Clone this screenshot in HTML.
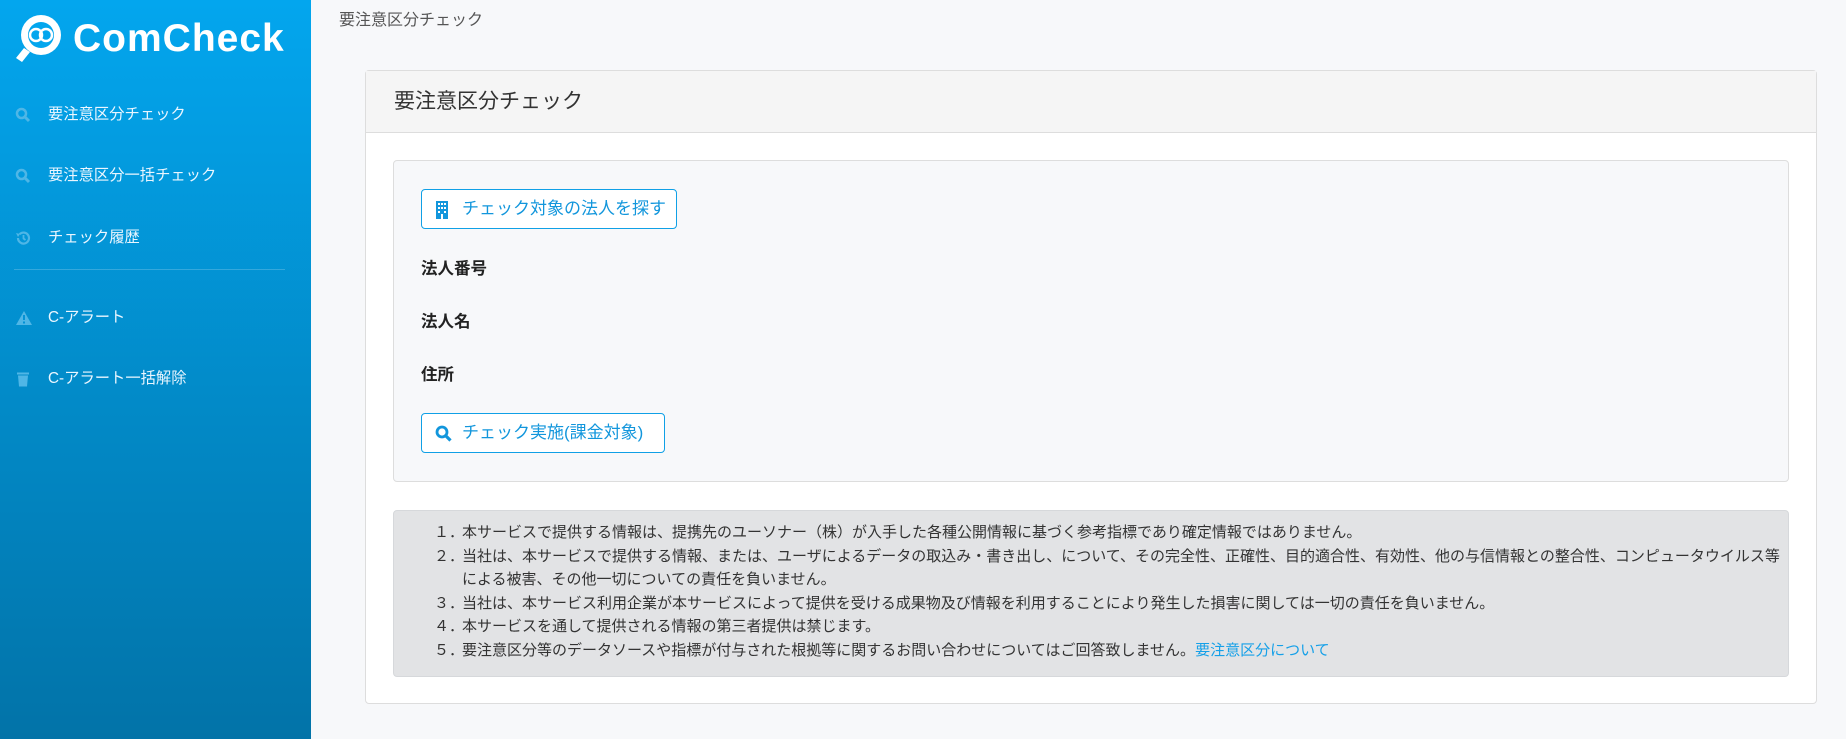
<!DOCTYPE html>
<html><head><meta charset="utf-8"><style>
*{box-sizing:border-box;margin:0;padding:0}
body{width:1846px;height:739px;overflow:hidden;background:#f7f8fa;font-family:"Liberation Sans","Noto Sans CJK JP",sans-serif;position:relative;color:#222}
.side{position:absolute;left:0;top:0;width:311px;height:739px;background:linear-gradient(#03a6ee,#0273a8)}
.logo{position:absolute;left:14px;top:14px}
.logotxt{position:absolute;left:73px;top:17px;color:#fff;font-size:39px;font-weight:bold;font-family:"Liberation Sans",sans-serif;letter-spacing:1px}
.nav{position:absolute;left:0;color:#eaf6ff;font-size:15.3px;width:311px;height:30px;line-height:30px}
.nav span.t{position:absolute;left:48px}
.nav svg{position:absolute;left:15px;top:7px}
.sep{position:absolute;left:14px;top:269px;width:271px;height:1px;background:rgba(255,255,255,.2)}
.bc{position:absolute;left:339px;top:6px;font-size:16px;color:#555}
.card{position:absolute;left:365px;top:70px;width:1452px;height:634px;background:#fff;border:1px solid #ddd;border-radius:4px}
.hd{height:62px;background:#f5f5f5;border-bottom:1px solid #ddd;padding-left:28px;line-height:62px;font-size:21px;color:#333}
.inner{position:absolute;left:27px;top:89px;width:1396px;height:322px;background:#f7f8fa;border:1px solid #ddd;border-radius:4px}
.btn{position:absolute;left:27px;height:40px;border:1px solid #10a0e6;border-radius:4px;background:#fff;color:#1296dc;font-size:17px;line-height:38px;padding-left:40px}
.btn svg{position:absolute;left:13px;top:11px}
.lbl{position:absolute;left:27px;font-weight:bold;font-size:16.5px;color:#222}
.note{position:absolute;left:27px;top:439px;width:1396px;height:167px;background:#e2e3e5;border:1px solid #d6d8db;border-radius:4px;font-size:15px;line-height:23.5px;color:#333;padding-top:10px}
.note div{position:relative;padding-left:68px;white-space:nowrap}
.note b{position:absolute;left:40px;font-weight:normal}
a{color:#15a0e8;text-decoration:none}
</style></head><body>
<div class="side">
<svg class="logo" width="50" height="50" viewBox="0 0 50 50"><circle cx="27" cy="21" r="20" fill="#fff"/><path d="M10 34 L2 44 L8 48 L16 38Z" fill="#fff"/><circle cx="27" cy="21" r="13" fill="#03a6ee"/><circle cx="22" cy="21" r="6" fill="none" stroke="#fff" stroke-width="2.5"/><circle cx="32" cy="21" r="6" fill="none" stroke="#fff" stroke-width="2.5"/></svg>
<div class="logotxt">ComCheck</div>
<div class="nav" style="top:100px"><svg width="16" height="16" viewBox="0 0 16 16"><circle cx="6.5" cy="6.5" r="4.5" fill="none" stroke="#4fb6e6" stroke-width="2.5"/><path d="M10 10 L14 14" stroke="#4fb6e6" stroke-width="3"/></svg><span class="t">要注意区分チェック</span></div>
<div class="nav" style="top:161px"><svg width="16" height="16" viewBox="0 0 16 16"><circle cx="6.5" cy="6.5" r="4.5" fill="none" stroke="#4fb6e6" stroke-width="2.5"/><path d="M10 10 L14 14" stroke="#4fb6e6" stroke-width="3"/></svg><span class="t">要注意区分一括チェック</span></div>
<div class="nav" style="top:223px"><svg width="16" height="16" viewBox="0 0 16 16"><path d="M3 8 A5.5 5.5 0 1 0 4.6 4.2" fill="none" stroke="#4fb6e6" stroke-width="2.2"/><path d="M1 3 L5 4 L3 7Z" fill="#4fb6e6"/><path d="M8.5 5 V8.5 L10.5 10" fill="none" stroke="#4fb6e6" stroke-width="1.8"/></svg><span class="t">チェック履歴</span></div>
<div class="sep"></div>
<div class="nav" style="top:303px"><svg width="18" height="16" viewBox="0 0 18 16"><path d="M9 1 L17 15 H1Z" fill="#4fb6e6"/><rect x="8" y="5" width="2" height="5" fill="#0292d6"/><rect x="8" y="11.5" width="2" height="2" fill="#0292d6"/></svg><span class="t">C-アラート</span></div>
<div class="nav" style="top:364px"><svg width="16" height="16" viewBox="0 0 16 16"><rect x="2" y="1.5" width="12" height="2" fill="#4fb6e6"/><path d="M3 4.5 H13 L12 15.5 H4Z" fill="#4fb6e6"/></svg><span class="t">C-アラート一括解除</span></div>
</div>
<div class="bc">要注意区分チェック</div>
<div class="card">
<div class="hd">要注意区分チェック</div>
<div class="inner">
<div class="btn" style="top:28px;width:256px"><svg width="14" height="18" viewBox="0 0 14 18"><rect x="1" y="0" width="12" height="18" fill="#1296dc"/><g fill="#fff"><rect x="3" y="2" width="2" height="2"/><rect x="6" y="2" width="2" height="2"/><rect x="9" y="2" width="2" height="2"/><rect x="3" y="6" width="2" height="2"/><rect x="6" y="6" width="2" height="2"/><rect x="9" y="6" width="2" height="2"/><rect x="3" y="10" width="2" height="2"/><rect x="9" y="10" width="2" height="2"/><rect x="6" y="13" width="2" height="5"/></g></svg>チェック対象の法人を探す</div>
<div class="lbl" style="top:94px">法人番号</div>
<div class="lbl" style="top:147px">法人名</div>
<div class="lbl" style="top:200px">住所</div>
<div class="btn" style="top:252px;width:244px"><svg width="17" height="17" viewBox="0 0 17 17"><circle cx="7" cy="7" r="5" fill="none" stroke="#1296dc" stroke-width="2.8"/><path d="M10.5 10.5 L15.5 15.5" stroke="#1296dc" stroke-width="3.2"/></svg>チェック実施(課金対象)</div>
</div>
<div class="note">
<div><b>１．</b>本サービスで提供する情報は、提携先のユーソナー（株）が入手した各種公開情報に基づく参考指標であり確定情報ではありません。</div>
<div><b>２．</b>当社は、本サービスで提供する情報、または、ユーザによるデータの取込み・書き出し、について、その完全性、正確性、目的適合性、有効性、他の与信情報との整合性、コンピュータウイルス等<br>による被害、その他一切についての責任を負いません。</div>
<div><b>３．</b>当社は、本サービス利用企業が本サービスによって提供を受ける成果物及び情報を利用することにより発生した損害に関しては一切の責任を負いません。</div>
<div><b>４．</b>本サービスを通して提供される情報の第三者提供は禁じます。</div>
<div><b>５．</b>要注意区分等のデータソースや指標が付与された根拠等に関するお問い合わせについてはご回答致しません。<a>要注意区分について</a></div>
</div>
</div>
</body></html>
